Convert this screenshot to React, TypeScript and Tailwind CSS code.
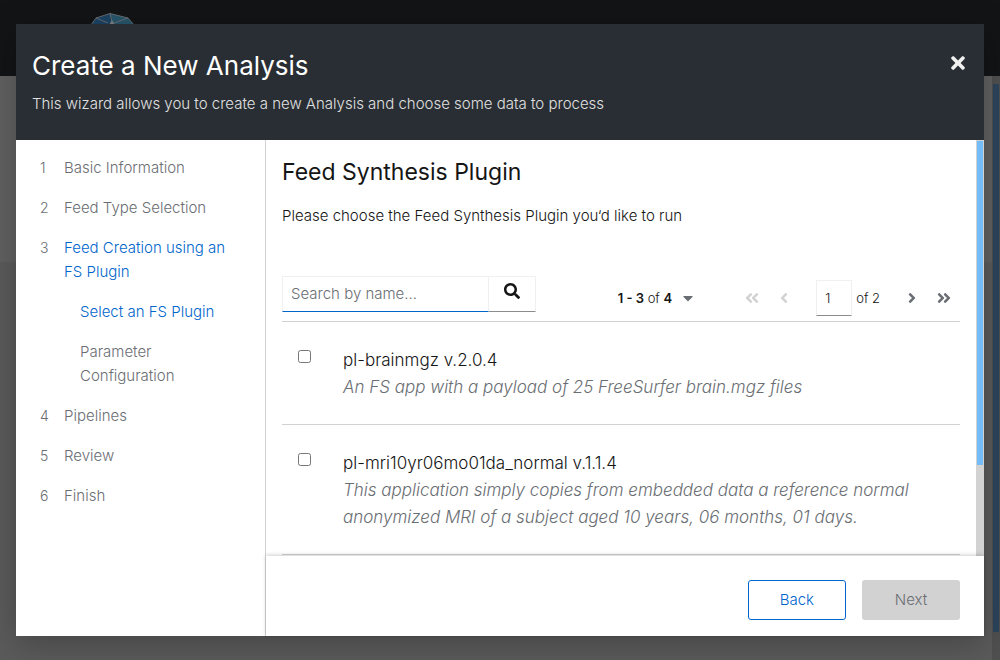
import React from "react";
import {
  FaAngleDoubleLeft,
  FaAngleDoubleRight,
  FaAngleLeft,
  FaAngleRight,
  FaCaretDown,
  FaSearch,
  FaTimes,
} from "react-icons/fa";

type Plugin = { id: string; name: string; description: string };

const plugins: Plugin[] = [
  {
    id: "brainmgz",
    name: "pl-brainmgz v.2.0.4",
    description: "An FS app with a payload of 25 FreeSurfer brain.mgz files",
  },
  {
    id: "mri10yr",
    name: "pl-mri10yr06mo01da_normal v.1.1.4",
    description:
      "This application simply copies from embedded data a reference normal anonymized MRI of a subject aged 10 years, 06 months, 01 days.",
  },
];

type Step = { label: string; current?: boolean; children?: Step[] };

const steps: Step[] = [
  { label: "Basic Information" },
  { label: "Feed Type Selection" },
  {
    label: "Feed Creation using an FS Plugin",
    current: true,
    children: [
      { label: "Select an FS Plugin", current: true },
      { label: "Parameter Configuration" },
    ],
  },
  { label: "Pipelines" },
  { label: "Review" },
  { label: "Finish" },
];

function Logo() {
  return (
    <svg className="ml-[90px] mt-3 size-11" viewBox="0 0 44 44" aria-hidden="true">
      <path d="M1 13 6 6 20 1.500 38 6 44 13 42 32 22 43 3 32Z" fill="#1c4465" />
      <path d="M20 1.500 38 6 44 13H22Z" fill="#27566b" />
      <path
        d="M1 13 6 6 20 1.500 38 6 44 13M6 6 18 11M20 1.500 22 10M38 6 24 11"
        fill="none"
        stroke="#646a6e"
        strokeWidth="1"
      />
      <path d="M19 13 22 8 25 13Z" fill="#7a8084" />
    </svg>
  );
}

function Backdrop() {
  return (
    <div className="flex h-screen flex-col" aria-hidden="true">
      <div className="h-[76px] shrink-0 overflow-hidden bg-[#121416]">
        <Logo />
      </div>
      <div className="flex flex-1">
        <div className="flex flex-1 flex-col">
          <div className="h-[186px] bg-[#616161]" />
          <div className="flex-1 bg-[#5b5b5b]" />
        </div>
        <div className="w-2 bg-[#505050] px-px pb-7 pt-2">
          <div className="h-full bg-[#2c455c]" />
        </div>
      </div>
    </div>
  );
}

function StepLink({ step }: { step: Step }) {
  return (
    <a
      href="#"
      aria-current={step.current ? "step" : undefined}
      className={step.current ? "block text-[#0066cc]" : "block text-[#6a6e73]"}
    >
      {step.label}
    </a>
  );
}

function StepNav() {
  return (
    <nav
      aria-label="Wizard steps"
      className="w-[250px] shrink-0 border-r border-[#d2d2d2] py-4 pl-6 pr-8"
    >
      <ol className="flex flex-col gap-4">
        {steps.map((step, index) => (
          <li key={step.label} className="flex">
            <span className="w-6 shrink-0 text-sm leading-6 text-[#6a6e73]">{index + 1}</span>
            <div>
              <StepLink step={step} />
              {step.children && (
                <ol className="mt-4 flex flex-col gap-4 pl-4">
                  {step.children.map((child) => (
                    <li key={child.label}>
                      <StepLink step={child} />
                    </li>
                  ))}
                </ol>
              )}
            </div>
          </li>
        ))}
      </ol>
    </nav>
  );
}

function Toolbar() {
  return (
    <div className="flex h-[46px] items-start justify-between border-b border-[#d2d2d2]">
      <form className="flex h-9" role="search" onSubmit={(event) => event.preventDefault()}>
        <input
          type="search"
          aria-label="Search by name"
          placeholder="Search by name..."
          className="w-[207px] border border-[#f0f0f0] border-b-[#0066cc] px-2 outline-none placeholder:text-[#6a6e73]"
        />
        <button
          type="submit"
          aria-label="Search"
          className="flex w-[47px] justify-center border border-l-0 border-[#f0f0f0] border-b-[#8a8d90] pt-1.5 text-base"
        >
          <FaSearch />
        </button>
      </form>
      <div className="flex items-center pt-1 text-[13px]">
        <button type="button" className="flex items-center gap-2">
          <span>
            <b className="font-semibold">1 - 3</b> of <b className="font-semibold">4</b>
          </span>
          <FaCaretDown className="text-base text-[#6a6e73]" />
        </button>
        <div className="ml-10 flex items-center text-base">
          <button type="button" disabled aria-label="First page" className="flex w-8 justify-center text-[#d2d2d2]">
            <FaAngleDoubleLeft />
          </button>
          <button type="button" disabled aria-label="Previous page" className="flex w-8 justify-center text-[#d2d2d2]">
            <FaAngleLeft />
          </button>
        </div>
        <label className="ml-4 flex items-center gap-1">
          <input
            aria-label="Current page"
            defaultValue="1"
            className="h-9 w-9 border border-[#f0f0f0] border-b-[#8a8d90] px-2 outline-none"
          />
          of 2
        </label>
        <div className="ml-4 flex items-center text-base text-[#6a6e73]">
          <button type="button" aria-label="Next page" className="flex w-8 justify-center">
            <FaAngleRight />
          </button>
          <button type="button" aria-label="Last page" className="flex w-8 justify-center">
            <FaAngleDoubleRight />
          </button>
        </div>
      </div>
    </div>
  );
}

function PluginRow({ plugin }: { plugin: Plugin }) {
  return (
    <li className="flex items-start border-b border-[#d2d2d2] pb-[23px] pl-4 pt-[25px]">
      <input id={plugin.id} type="checkbox" className="mt-[3px] size-[13px] shrink-0" />
      <label htmlFor={plugin.id} className="ml-8 text-[17px] leading-[27px]">
        <span className="block">{plugin.name}</span>
        <em className="block text-[#6a6e73]">{plugin.description}</em>
      </label>
    </li>
  );
}

export default function App() {
  return (
    <div className="relative font-['Inter',sans-serif] text-[15px] font-light leading-6 text-[#151515]">
      <Backdrop />
      <div
        role="dialog"
        aria-modal="true"
        aria-labelledby="wizard-title"
        className="absolute inset-x-4 inset-y-6 flex flex-col bg-white shadow-[0_8px_32px_rgba(3,3,3,0.25)]"
      >
        <header className="flex items-start justify-between bg-[#292e34] py-6 pl-4 pr-4 text-white">
          <div>
            <h1 id="wizard-title" className="text-[26px] font-normal leading-9">
              Create a New Analysis
            </h1>
            <p className="mt-2 text-[#e0e0e0]">
              This wizard allows you to create a new Analysis and choose some data to process
            </p>
          </div>
          <button type="button" aria-label="Close" className="mt-[5px] text-xl text-[#f0f0f0]">
            <FaTimes />
          </button>
        </header>
        <div className="flex min-h-0 flex-1">
          <StepNav />
          <div className="flex min-w-0 flex-1 flex-col">
            <div className="flex min-h-0 flex-1">
              <main className="min-w-0 flex-1 overflow-hidden py-4 pl-4 pr-4">
                <h2 className="text-[23px] font-normal leading-8">Feed Synthesis Plugin</h2>
                <p className="mb-12 mt-4">Please choose the Feed Synthesis Plugin you‘d like to run</p>
                <Toolbar />
                <ul>
                  {plugins.map((plugin) => (
                    <PluginRow key={plugin.id} plugin={plugin} />
                  ))}
                </ul>
              </main>
              <div className="w-2 bg-[#d2d2d2] px-px pt-px" aria-hidden="true">
                <div className="h-[78%] bg-[#73bcf7]" />
              </div>
            </div>
            <footer className="relative flex justify-end gap-4 bg-white px-6 pb-4 pt-6 shadow-[0_-1px_4px_rgba(3,3,3,0.2)]">
              <button type="button" className="h-10 min-w-[98px] rounded-[3px] border border-[#0066cc] px-[31px] text-[#0066cc]">
                Back
              </button>
              <button type="button" disabled className="h-10 min-w-[98px] rounded-[3px] bg-[#d2d2d2] px-[31px] text-[#6a6e73]">
                Next
              </button>
            </footer>
          </div>
        </div>
      </div>
    </div>
  );
}
